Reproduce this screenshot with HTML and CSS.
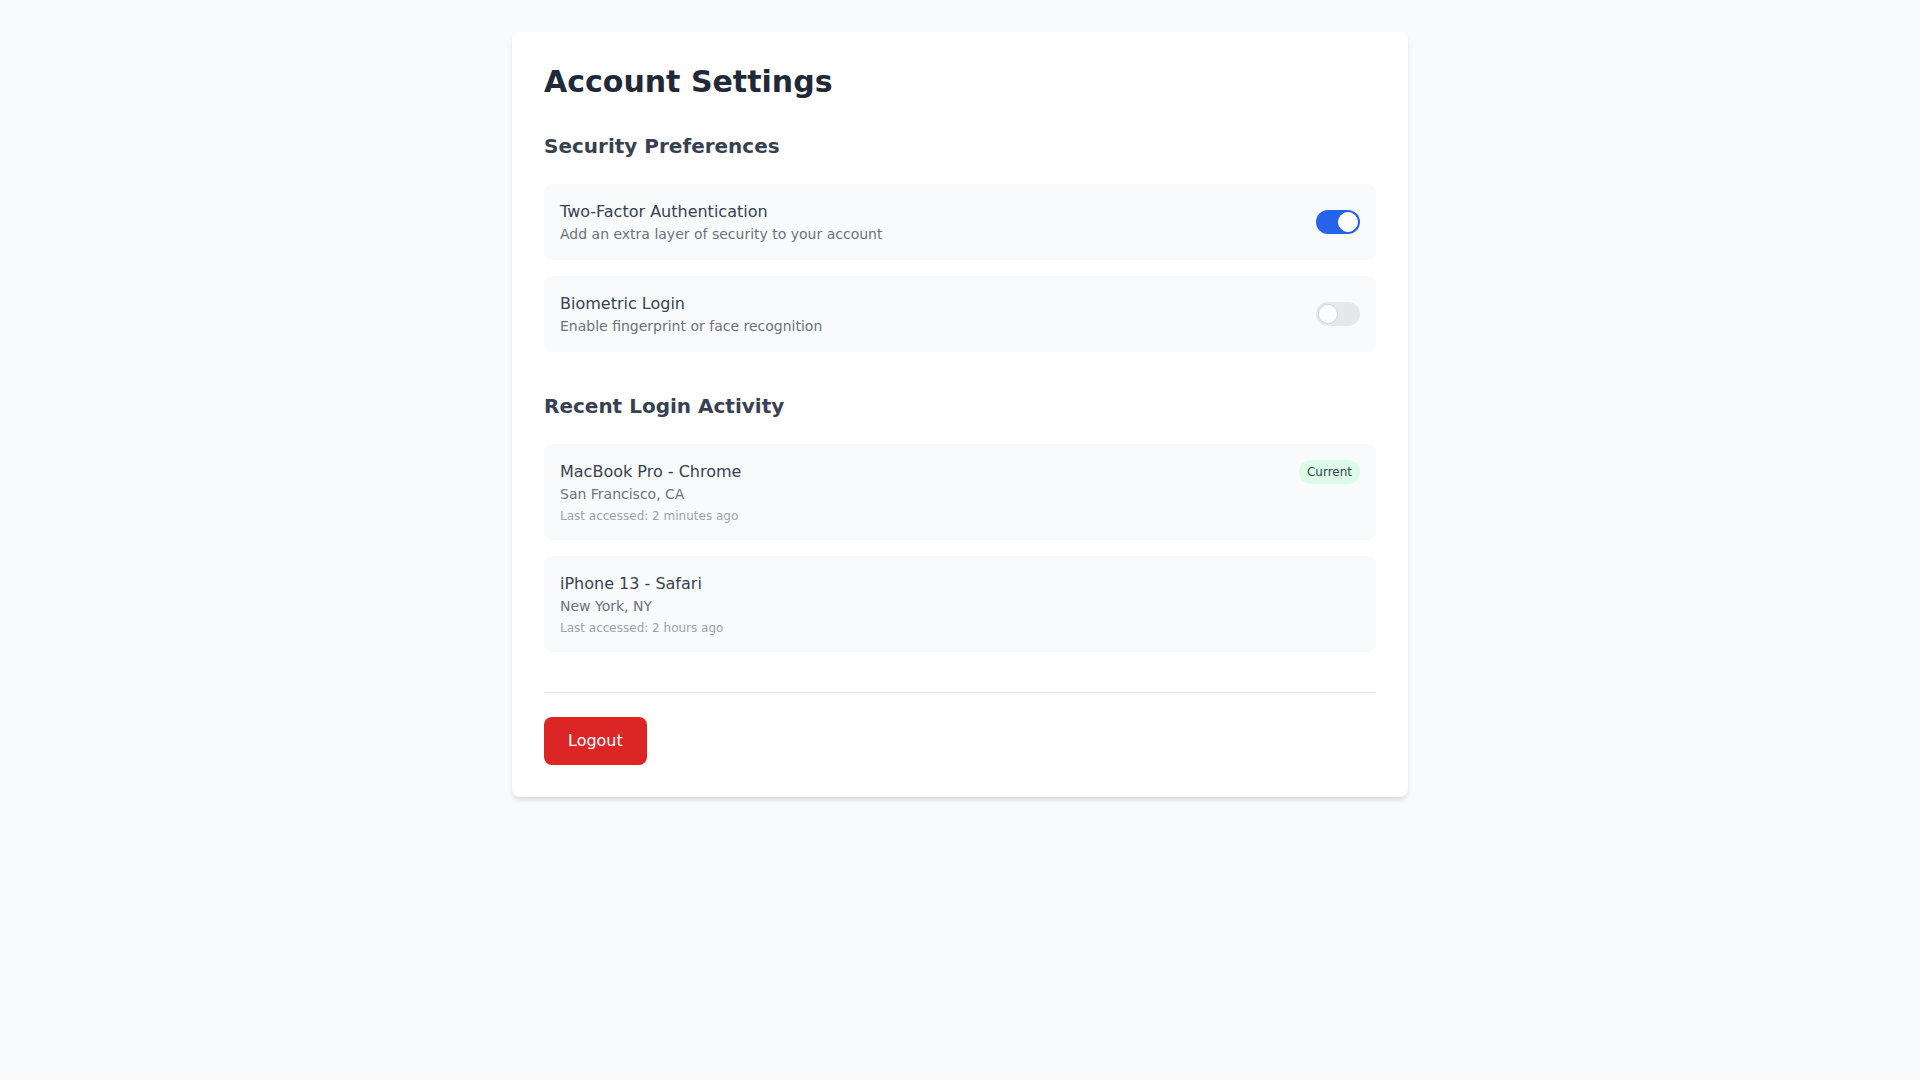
FILE: index.html
```html
<!DOCTYPE html>
<html lang="en">
<head>
<meta charset="utf-8">
<title>Account Settings</title>
<link rel="stylesheet" href="styles.css">
</head>
<body>
<main class="page">
  <div class="card">
    <h1 class="title">Account Settings</h1>

    <section class="section">
      <h2 class="section-title">Security Preferences</h2>
      <div class="list">
        <div class="row">
          <div class="row-text">
            <div class="row-title">Two-Factor Authentication</div>
            <div class="row-desc">Add an extra layer of security to your account</div>
          </div>
          <span class="toggle on"><span class="knob"></span></span>
        </div>
        <div class="row">
          <div class="row-text">
            <div class="row-title">Biometric Login</div>
            <div class="row-desc">Enable fingerprint or face recognition</div>
          </div>
          <span class="toggle"><span class="knob"></span></span>
        </div>
      </div>
    </section>

    <section class="section">
      <h2 class="section-title">Recent Login Activity</h2>
      <div class="list">
        <div class="login">
          <div class="row-text">
            <div class="row-title">MacBook Pro - Chrome</div>
            <div class="row-desc">San Francisco, CA</div>
            <div class="row-meta">Last accessed: 2 minutes ago</div>
          </div>
          <span class="badge">Current</span>
        </div>
        <div class="login">
          <div class="row-text">
            <div class="row-title">iPhone 13 - Safari</div>
            <div class="row-desc">New York, NY</div>
            <div class="row-meta">Last accessed: 2 hours ago</div>
          </div>
        </div>
      </div>
    </section>

    <div class="footer">
      <button class="logout" type="button">Logout</button>
    </div>
  </div>
</main>
</body>
</html>
```

FILE: styles.css
```css
* { box-sizing: border-box; }
html, body { margin: 0; padding: 0; }
body {
  background: #f9fafb;
  font-family: "DejaVu Sans", sans-serif;
  color: #374151;
}
.page {
  padding: 32px 0;
}
.card {
  width: 896px;
  margin: 0 auto;
  background: #ffffff;
  border-radius: 8px;
  box-shadow: 0 4px 6px -1px rgba(0,0,0,0.1), 0 2px 4px -2px rgba(0,0,0,0.1);
  padding: 32px;
}
.title {
  margin: 0 0 32px;
  font-size: 30px;
  line-height: 36px;
  font-weight: 700;
  color: #1f2937;
}
.section {
  margin-bottom: 24px;
}
.section-title {
  margin: 0 0 24px;
  font-size: 20px;
  line-height: 28px;
  font-weight: 700;
  color: #374151;
}
.list {
  display: flex;
  flex-direction: column;
  gap: 16px;
  padding-bottom: 16px;
}
.row, .login {
  display: flex;
  justify-content: space-between;
  background: #f9fafb;
  border-radius: 8px;
  padding: 16px;
}
.row { align-items: center; }
.login { align-items: flex-start; }
.row-title {
  font-size: 16px;
  line-height: 24px;
  color: #374151;
}
.row-desc {
  font-size: 14px;
  line-height: 20px;
  color: #6b7280;
}
.row-meta {
  margin-top: 4px;
  font-size: 12px;
  line-height: 16px;
  color: #9ca3af;
}
.toggle {
  position: relative;
  display: block;
  width: 44px;
  height: 24px;
  border-radius: 9999px;
  background: #e5e7eb;
}
.toggle .knob {
  position: absolute;
  top: 2px;
  left: 2px;
  width: 20px;
  height: 20px;
  border-radius: 50%;
  background: #ffffff;
  border: 1px solid #d1d5db;
}
.toggle.on { background: #2563eb; }
.toggle.on .knob {
  left: 22px;
  border-color: #ffffff;
}
.badge {
  display: inline-block;
  padding: 4px 8px;
  font-size: 12px;
  line-height: 16px;
  border-radius: 9999px;
  background: #dcfce7;
  color: #374151;
}
.footer {
  border-top: 1px solid #e5e7eb;
  padding-top: 24px;
}
.logout {
  font-family: "DejaVu Sans", sans-serif;
  font-size: 16px;
  line-height: 24px;
  padding: 12px 24px;
  background: #dc2626;
  color: #ffffff;
  border: none;
  border-radius: 8px;
  cursor: pointer;
}
```
